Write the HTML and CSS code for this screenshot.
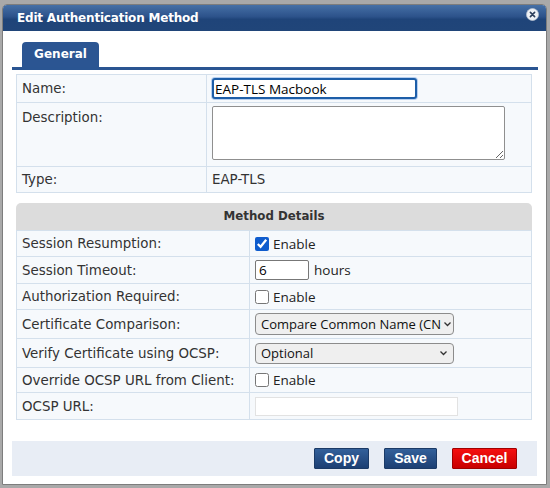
FILE: index.html
```html
<!DOCTYPE html>
<html>
<head>
<meta charset="utf-8">
<link rel="stylesheet" href="styles.css">
</head>
<body>
<div class="dialog">
  <div class="titlebar">
    <span class="title">Edit Authentication Method</span>
    <span class="close">
      <svg width="13" height="13" viewBox="0 0 13 13"><circle cx="6.5" cy="6.5" r="6" fill="#eef1f5" stroke="#b9c3d2" stroke-width="0.8"/><path d="M4.4 4.4 L8.6 8.6 M8.6 4.4 L4.4 8.6" stroke="#2d3f5c" stroke-width="1.6" stroke-linecap="round"/></svg>
    </span>
  </div>
  <div class="body">
    <div class="tabs"><span class="tab">General</span></div>
    <div class="grid top">
      <div class="cell lbl r-name">Name:</div>
      <div class="cell val r-name"><input class="name-input" type="text" value="EAP-TLS Macbook"></div>
      <div class="cell lbl r-desc top-al">Description:</div>
      <div class="cell val r-desc top-al2"><textarea class="desc"></textarea></div>
      <div class="cell lbl r-type">Type:</div>
      <div class="cell val r-type">EAP-TLS</div>
    </div>
    <div class="details">
      <div class="head">Method Details</div>
      <div class="grid dgrid">
        <div class="cell h1">Session Resumption:</div>
        <div class="cell h1"><label class="chk"><input type="checkbox" checked> Enable</label></div>
        <div class="cell h2">Session Timeout:</div>
        <div class="cell h2"><input class="small-input" type="text" value="6"><span class="unit">hours</span></div>
        <div class="cell h3">Authorization Required:</div>
        <div class="cell h3"><label class="chk"><input type="checkbox"> Enable</label></div>
        <div class="cell h4">Certificate Comparison:</div>
        <div class="cell h4"><span class="select s1">Compare Common Name (CN<svg class="chev" width="9" height="6" viewBox="0 0 9 6"><path d="M1.5 1.5 L4.5 4.5 L7.5 1.5" fill="none" stroke="#333" stroke-width="1.3"/></svg></span></div>
        <div class="cell h5">Verify Certificate using OCSP:</div>
        <div class="cell h5"><span class="select s2">Optional<svg class="chev" width="9" height="6" viewBox="0 0 9 6"><path d="M1.5 1.5 L4.5 4.5 L7.5 1.5" fill="none" stroke="#333" stroke-width="1.3"/></svg></span></div>
        <div class="cell h6">Override OCSP URL from Client:</div>
        <div class="cell h6"><label class="chk"><input type="checkbox"> Enable</label></div>
        <div class="cell h7">OCSP URL:</div>
        <div class="cell h7"><span class="url-input"></span></div>
      </div>
    </div>
    <div class="footer">
      <button class="btn blue copy">Copy</button>
      <button class="btn blue save">Save</button>
      <button class="btn red">Cancel</button>
    </div>
  </div>
</div>
</body>
</html>
```
FILE: styles.css
```css
html, body {
  margin: 0;
  padding: 0;
}
body {
  width: 550px;
  height: 488px;
  background: #a9a9a9;
  font-family: "DejaVu Sans", Verdana, sans-serif;
  font-size: 13.4px;
  color: #333;
  overflow: hidden;
}
.dialog {
  margin: 4px 0 0 2px;
  width: 545px;
  height: 481px;
  background: #fff;
  border: 1px solid #7d7d7d;
  border-radius: 5px 5px 0 0;
  box-sizing: border-box;
  overflow: hidden;
}
.titlebar {
  height: 26px;
  background: linear-gradient(#4670a6 0%, #2c528a 45%, #1f4479 55%, #204579 100%);
  display: flex;
  align-items: center;
  justify-content: space-between;
  padding: 0 7px 0 14px;
}
.title {
  color: #fff;
  font-weight: bold;
  font-size: 12px;
  letter-spacing: -0.2px;
}
.close {
  display: flex;
  margin-top: -8px;
}
.body {
  padding: 11px 0 0 9px;
}
.tabs {
  width: 516px;
  padding-left: 10px;
  border-bottom: 3px solid #2a5592;
  height: 25px;
  display: flex;
  align-items: flex-end;
}
.tab {
  background: #2b5592;
  color: #fff;
  font-weight: bold;
  font-size: 12px;
  height: 25px;
  line-height: 25px;
  width: 77px;
  border-radius: 4px 4px 0 0;
  text-align: center;
}
.grid {
  display: grid;
  gap: 1px;
  padding: 1px;
  background: #d4e0ec;
  width: 516px;
  box-sizing: border-box;
  margin-left: 4px;
}
.cell {
  background: #f6f9fc;
  padding: 0 5px;
  display: flex;
  align-items: center;
  color: #333;
  white-space: nowrap;
}
.top {
  margin-top: 4px;
  grid-template-columns: 189px 324px;
  grid-template-rows: 27px 63px 25px;
}
.top-al {
  align-items: flex-start;
  padding-top: 7px;
}
.top-al2 {
  align-items: flex-start;
  padding-top: 3px;
}
.name-input {
  width: 205px;
  height: 21px;
  box-sizing: border-box;
  border: 2px solid #1d5ea8;
  box-shadow: 0 0 0 1px #b6cff0;
  border-radius: 3px;
  font-family: "Open Sans", "Noto Sans", sans-serif;
  font-size: 13.5px;
  padding: 0 1px;
  color: #000;
  margin: 0;
  outline: none;
}
.desc {
  display: block;
  width: 293px;
  height: 54px;
  box-sizing: border-box;
  border: 1px solid #8f8f8f;
  border-radius: 2px;
  resize: both;
  margin: 0;
  background: #fff;
}
.details {
  margin-top: 10px;
}
.head {
  margin-left: 4px;
  width: 516px;
  height: 27px;
  line-height: 27px;
  background: #dcdcdc;
  border-radius: 5px 5px 0 0;
  font-weight: bold;
  font-size: 11.8px;
  color: #333;
  text-align: center;
}
.dgrid {
  padding-top: 1px;
  grid-template-columns: 232px 281px;
  grid-template-rows: 25px 26px 25px 28px 28px 24px 26px;
}
.dgrid .cell:nth-child(odd) {
  padding-right: 0;
}
.chk {
  display: inline-flex;
  align-items: center;
  font-family: "Open Sans", "Noto Sans", sans-serif;
  font-size: 13.5px;
  color: #222;
}
.chk input {
  width: 14px;
  height: 14px;
  margin: 0 4px 0 0;
  accent-color: #0f5ccd;
}
.small-input {
  width: 54px;
  height: 20px;
  box-sizing: border-box;
  border: 1px solid #777;
  border-radius: 2px;
  font-family: "Open Sans", "Noto Sans", sans-serif;
  font-size: 13.5px;
  padding: 0 3px;
  color: #000;
  margin: 0;
}
.unit {
  font-family: "Open Sans", "Noto Sans", sans-serif;
  font-size: 13.5px;
  color: #222;
  margin-left: 5px;
}
.select {
  display: inline-flex;
  align-items: center;
  justify-content: space-between;
  width: 199px;
  box-sizing: border-box;
  border: 1px solid #8c8c8c;
  border-radius: 4px;
  background: #efefef;
  font-family: "Open Sans", "Noto Sans", sans-serif;
  font-size: 13px;
  color: #111;
  padding: 0 5px 0 5px;
  white-space: nowrap;
  overflow: hidden;
}
.s1 { height: 22px; }
.s2 { height: 21px; }
.chev { flex: none; margin-left: 2px; }
.url-input {
  display: inline-block;
  width: 203px;
  height: 19px;
  box-sizing: border-box;
  border: 1px solid #e2e2e2;
  background: #fff;
}
.footer {
  margin-top: 21px;
  margin-left: 0;
  width: 525px;
  height: 35px;
  background: #e8edf5;
  display: flex;
  justify-content: flex-end;
  align-items: center;
  gap: 15px;
  padding-right: 20px;
  box-sizing: border-box;
}
.btn {
  height: 21px;
  border: 1px solid #1b3a66;
  color: #fff;
  font-family: "Liberation Sans", Arial, sans-serif;
  font-weight: bold;
  font-size: 14px;
  padding: 0;
  border-radius: 1px;
  line-height: 19px;
  margin-top: 0;
}
.btn.blue {
  background: linear-gradient(#33609a, #1c3f73);
}
.copy { width: 55px; }
.save { width: 53px; }
.btn.red {
  width: 65px;
  background: linear-gradient(#f51010, #c80000);
  border-color: #a00000;
}
```
